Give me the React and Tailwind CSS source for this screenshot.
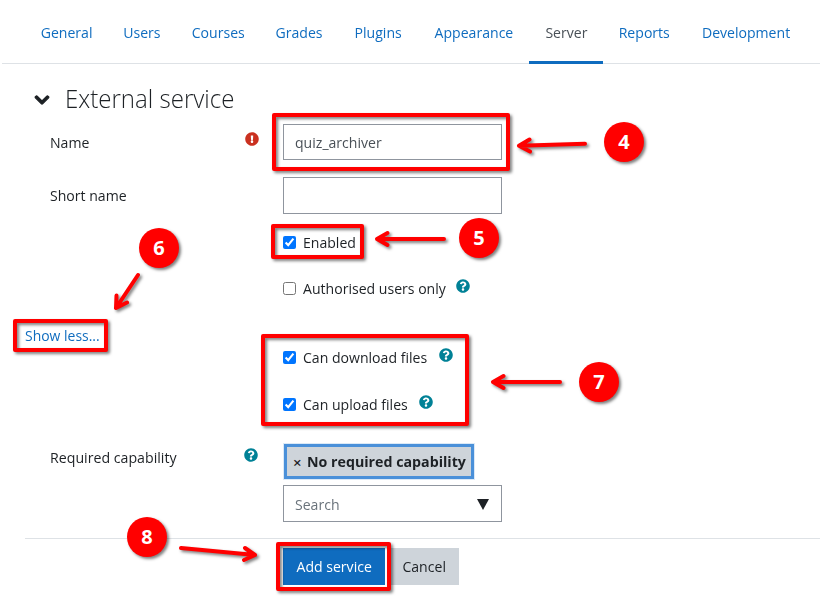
import React from "react";
import { FaChevronDown, FaExclamationCircle, FaQuestionCircle } from "react-icons/fa";

const tabs = [
  { label: "General", width: "w-[83px]" },
  { label: "Users", width: "w-[68px]" },
  { label: "Courses", width: "w-[85px]" },
  { label: "Grades", width: "w-[77px]" },
  { label: "Plugins", width: "w-[81px]" },
  { label: "Appearance", width: "w-[110px]" },
  { label: "Server", width: "w-[74px]", active: true },
  { label: "Reports", width: "w-[82px]" },
  { label: "Development", width: "w-[122px]" },
];

const frames = [
  "left-[272px] top-[113px] w-[238px] h-[58px]",
  "left-[271px] top-[224px] w-[93px] h-[35px]",
  "left-[13px] top-[319px] w-[95px] h-[33px]",
  "left-[261px] top-[334px] w-[208px] h-[92px]",
  "left-[276px] top-[542px] w-[115px] h-[49px]",
];

const badges = [
  { n: 4, at: "left-[604px] top-[122px]" },
  { n: 5, at: "left-[459px] top-[218px]" },
  { n: 6, at: "left-[139px] top-[228px]" },
  { n: 7, at: "left-[579px] top-[362px]" },
  { n: 8, at: "left-[127px] top-[517px]" },
];

const arrows = [
  "M585 143.8L519 145.8M529.5 139.5L519 145.8L530 151.5",
  "M444 239L377 239M387.5 233L377 239L387.5 245",
  "M138 275L116 308M116.5 295.5L116 308L127 302.5",
  "M560 382L493 382M503.5 376L493 382L503.5 388",
  "M181 548L255 555M245 548L255 555L244 560",
];

// Text set slightly narrower than the font's natural width.
function Narrow({ children, className = "origin-left", scale = "scale-x-[0.938]" }) {
  return <span className={`inline-block whitespace-nowrap ${scale} ${className}`}>{children}</span>;
}

function Help({ className = "" }) {
  return <FaQuestionCircle className={`size-3.5 shrink-0 text-[#008196] ${className}`} />;
}

function Check({ label, width = "w-[60px]", checked = false, help = false, className }) {
  return (
    <div className={`ml-[283px] flex h-6 items-center ${className}`}>
      <label className="flex items-center gap-[6.5px]">
        <input type="checkbox" defaultChecked={checked} className="size-[13px]" />
        <span className={width}>
          <Narrow>{label}</Narrow>
        </span>
      </label>
      {help && <Help className="mb-[4px] ml-[9px]" />}
    </div>
  );
}

function Annotations() {
  return (
    <div className="pointer-events-none absolute inset-0">
      {frames.map((f) => (
        <div key={f} className={`absolute rounded-[2px] border-4 border-[#ff0000] drop-shadow-[2px_2px_1.5px_rgba(0,0,0,0.5)] ${f}`} />
      ))}
      <svg className="absolute inset-0 drop-shadow-[2px_2px_1.5px_rgba(0,0,0,0.5)]" width="820" height="597" fill="none" stroke="#ff0000" strokeWidth="4" strokeLinecap="round" strokeLinejoin="round">
        {arrows.map((d) => (
          <path key={d} d={d} />
        ))}
      </svg>
      {badges.map((b) => (
        <div key={b.n} className={`absolute flex size-10 items-center justify-center rounded-full bg-[#ff0000] text-[20px] font-bold text-white shadow-[2px_2px_3px_rgba(0,0,0,0.5)] ${b.at}`}>
          {b.n}
        </div>
      ))}
    </div>
  );
}

export default function App() {
  return (
    <div className="relative h-[597px] w-[820px] overflow-hidden bg-white font-['Open_Sans','Noto_Sans',sans-serif] text-[15px] leading-[22px] text-[#1d2125]">
      <nav className="ml-[2px] flex h-16 border-b border-[#dee2e6] pl-[23px]">
        {tabs.map((t) => (
          <a key={t.label} className={`flex h-16 shrink-0 items-start justify-center border-b-[3px] pt-[21px] ${t.width} ${t.active ? "border-[#0f6cbf] text-[#495057]" : "border-transparent text-[#0f6cbf]"}`}>
            <Narrow className="origin-center">{t.label}</Narrow>
          </a>
        ))}
      </nav>

      <div className="mt-4 flex h-9 items-center pl-[34px]">
        <FaChevronDown className="mt-[3px] size-4 stroke-current stroke-[40]" />
        <h3 className="ml-[15px] text-[26px] font-light">
          <Narrow scale="scale-x-[0.925]">External service</Narrow>
        </h3>
      </div>

      <div className="mt-2 flex h-9 pl-[50px]">
        <span className="w-[195px] pt-[7px]">
          <Narrow>Name</Narrow>
        </span>
        <FaExclamationCircle className="mt-2 size-3.5 text-[#ca3120]" />
        <div className="ml-6 h-9 w-[219px] border border-[#8f959e] px-[11px] pt-1.5 text-[#495057]">
          <Narrow>quiz_archiver</Narrow>
        </div>
      </div>

      <div className="mt-[17px] flex h-[37px] pl-[50px]">
        <span className="w-[233px] pt-[7px]">
          <Narrow>Short name</Narrow>
        </span>
        <input className="h-[37px] w-[219px] border border-[#8f959e] px-3" />
      </div>

      <Check label="Enabled" checked className="mt-4" />
      <Check label="Authorised users only" width="w-[144px]" help className="mt-[22px]" />
      <a className="mt-[23px] ml-[25px] block h-6 leading-6 text-[#0f6cbf]">
        <Narrow scale="scale-x-[0.93]">Show less...</Narrow>
      </a>
      <Check label="Can download files" width="w-[127px]" checked help className="-mt-[2px]" />
      <Check label="Can upload files" width="w-[107px]" checked help className="mt-[23px]" />

      <div className="mt-[28px] flex h-[78px] pl-[50px]">
        <span className="w-[194px] pt-[2px]">
          <Narrow scale="scale-x-[0.945]">Required capability</Narrow>
        </span>
        <Help className="mt-1" />
        <div className="ml-[25px]">
          <div className="ml-px flex h-[35px] w-[190px] items-center border-[3px] border-[#4a90d9] bg-[#ced4da] pb-0.5 pl-[6px] font-bold shadow-[0_0_0_1px_#dbe9f7]">
            <span className="mr-[5px] pt-0.5 text-[15px] font-semibold">×</span>
            <Narrow scale="scale-x-[0.948]">No required capability</Narrow>
          </div>
          <div className="mt-[6px] flex h-[37px] w-[219px] items-center justify-between border border-[#8f959e] px-[11px] text-[#6a737b]">
            <Narrow>Search</Narrow>
            <svg width="12" height="11" className="mt-px mr-px fill-[#1d2125]">
              <path d="M0 0H12L6 11Z" />
            </svg>
          </div>
        </div>
      </div>

      <div className="mt-4 ml-[25px] border-t border-[#dee2e6]" />

      <div className="mt-[9px] ml-[283px] flex h-[37px] gap-1">
        <button className="w-[102px] bg-[#0f6cbf] pb-0.5 text-white">
          <Narrow className="origin-center">Add service</Narrow>
        </button>
        <button className="w-[70px] bg-[#ced4da] pb-0.5">
          <Narrow className="origin-center">Cancel</Narrow>
        </button>
      </div>

      <Annotations />
    </div>
  );
}
